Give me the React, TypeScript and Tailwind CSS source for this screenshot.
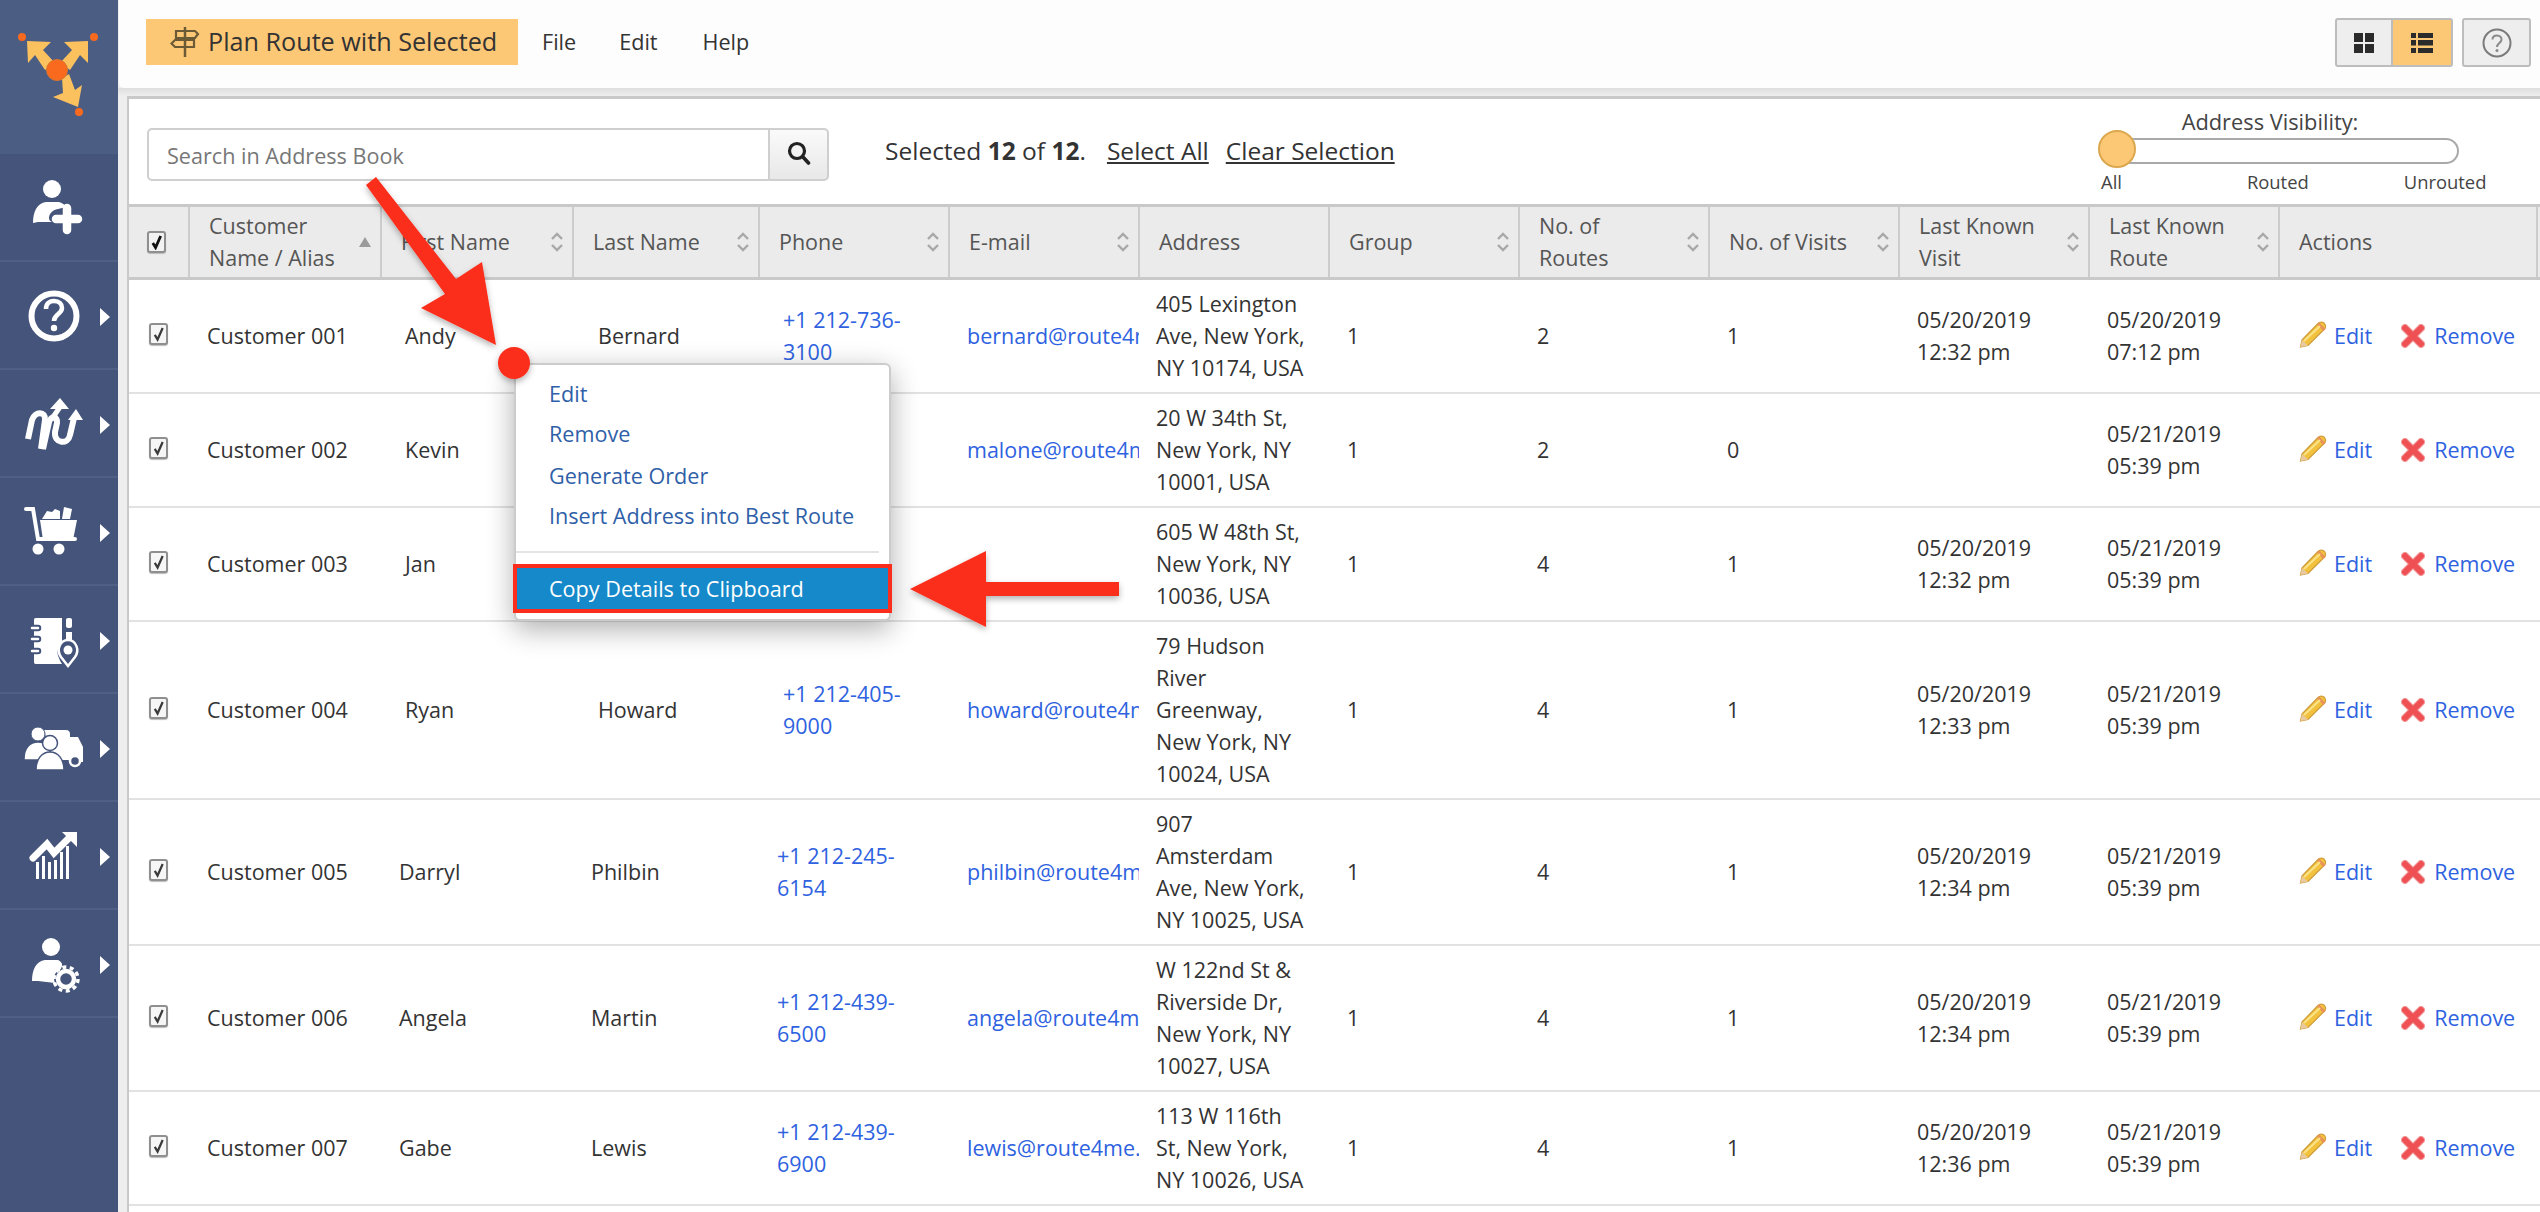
import React from "react";

const W = "#ffffff";

function Tri() {
  return <polygon points="100,46 110,55 100,64" fill={W} />;
}

function Cell({ children, light, tri = true }: { children: React.ReactNode; light?: boolean; tri?: boolean }) {
  return (
    <div className={light ? "h-[154px] bg-[#4c5d83]" : "h-[108px] border-b-2 border-[#4f5f85] bg-[#44547a]"}>
      <svg viewBox={light ? "0 0 118 154" : "0 0 118 106"} className={light ? "block w-[118px] h-[154px]" : "block w-[118px] h-[106px]"}>
        {children}
        {tri && !light ? <Tri /> : null}
      </svg>
    </div>
  );
}

function Sidebar() {
  return (
    <div className="w-[118px] shrink-0 bg-[#44547a] flex flex-col">
      <Cell light>
        <circle cx="22" cy="37" r="4" fill="#f96a1e" />
        <circle cx="94" cy="37" r="4" fill="#f96a1e" />
        <circle cx="79" cy="112" r="4" fill="#f96a1e" />
        <polygon points="27,41 51,42 43,50 55,63 45,70 35,55 28,63" fill="#fbc15e" />
        <polygon points="88,41 64,42 72,50 60,63 70,70 80,55 88,63" fill="#fbc15e" />
        <polygon points="62,78 69,74 75,90 82,85 78,107 53,97 63,93" fill="#fbc15e" />
        <circle cx="57" cy="70" r="10.5" fill="#f96a1e" stroke="#d8762e" strokeWidth="1" />
      </Cell>
      <Cell tri={false}>
        <circle cx="52" cy="35" r="9" fill={W} />
        <path d="M33 69 C33 58 37 49 46 48 L59 48 C63 49 65 51 66 53 L58 55 C52 56 49 60 49 64 C49 66 50 67 52 68 L38 68 Z" fill={W} />
        <path d="M56 65 H78 M67 54 V76" stroke={W} strokeWidth="8.5" strokeLinecap="round" />
      </Cell>
      <Cell>
        <circle cx="54" cy="54" r="22.5" fill="none" stroke={W} strokeWidth="6" />
        <path d="M46 47 C46 41 50 39 54 39 C59 39 62 42 62 46 C62 52 54 52 54 59" fill="none" stroke={W} strokeWidth="4.5" />
        <circle cx="54" cy="66" r="3.2" fill={W} />
      </Cell>
      <Cell>
        <path d="M28 69 L32 50 C35 41 46 41 45 50 L41 79" fill="none" stroke={W} strokeWidth="6" />
        <path d="M43 79 L49 52 C51 45 58 46 57 53 L55 62 C54 74 68 75 70 65 L74 48" fill="none" stroke={W} strokeWidth="6" />
        <path d="M51 50 L60 37" fill="none" stroke={W} strokeWidth="5" />
        <polygon points="50,39 60,28 69,39" fill={W} />
        <polygon points="68,50 76,39 83,50" fill={W} />
      </Cell>
      <Cell>
        <path d="M26 31 H33 L38 61 H75" fill="none" stroke={W} strokeWidth="4" strokeLinecap="round" />
        <path d="M40 42 H77 L73 62 H43 Z" fill={W} />
        <path d="M42 41 L47 33 L52 34 L55 31 L60 33 V41 Z" fill={W} />
        <path d="M62 41 L64 29 L72 31 L70 41 Z" fill={W} />
        <circle cx="38" cy="71" r="5.5" fill={W} />
        <circle cx="59" cy="71" r="5.5" fill={W} />
      </Cell>
      <Cell>
        <path d="M36 32 H62 V57 C58 61 56 66 59 72 C60 75 61 76 62 78 H36 C34 78 34 77 34 75 V35 C34 33 34 32 36 32 Z" fill={W} />
        <rect x="66" y="32" width="6" height="10" rx="2" fill={W} />
        <rect x="66" y="46" width="6" height="9" fill={W} />
        <path d="M32 42 H38 M32 53 H38 M32 65 H38" stroke="#44547a" strokeWidth="6.5" strokeLinecap="round" />
        <path d="M32 42 H38 M32 53 H38 M32 65 H38" stroke={W} strokeWidth="2.5" strokeLinecap="round" />
        <path d="M68 80 L61 71 C56 64 60 54 68 54 C76 54 80 64 75 71 Z" fill="#44547a" stroke={W} strokeWidth="2.5" />
        <circle cx="68" cy="64" r="4.5" fill={W} />
      </Cell>
      <Cell>
        <path d="M44 36 H66 C69 36 70 38 70 40 V66 H52 Z" fill={W} />
        <path d="M70 43 H78 L83 53 V68 H70 Z" fill={W} />
        <circle cx="75" cy="67" r="5" fill="#44547a" stroke={W} strokeWidth="2.5" />
        <circle cx="38" cy="40" r="7" fill={W} stroke="#44547a" strokeWidth="1" />
        <path d="M24 65 C24 54 30 48 38 48 C44 48 50 50 50 56 V66 H24 Z" fill={W} stroke="#44547a" strokeWidth="1.5" />
        <circle cx="50" cy="49" r="7.5" fill={W} stroke="#44547a" strokeWidth="1.5" />
        <path d="M36 76 C36 65 42 58 50 58 C58 58 64 65 64 76 Z" fill={W} stroke="#44547a" strokeWidth="1.5" />
      </Cell>
      <Cell>
        <path d="M33 56 L47 42 L54 51 L71 34" fill="none" stroke={W} strokeWidth="7" strokeLinecap="round" />
        <polygon points="62,30 77,30 77,45" fill={W} />
        <rect x="36" y="60" width="3" height="17" fill={W} />
        <rect x="42" y="54" width="3" height="23" fill={W} />
        <rect x="48" y="60" width="3" height="17" fill={W} />
        <rect x="54" y="58" width="3" height="19" fill={W} />
        <rect x="60" y="50" width="3" height="27" fill={W} />
        <rect x="66" y="44" width="3" height="33" fill={W} />
      </Cell>
      <Cell>
        <circle cx="51" cy="37" r="9" fill={W} />
        <path d="M32 71 C32 60 36 51 45 50 L58 50 C62 52 64 55 60 60 C54 62 53 68 55 73 L38 71 Z" fill={W} />
        <circle cx="66" cy="69" r="8" fill="none" stroke={W} strokeWidth="4.5" />
        <circle cx="66" cy="69" r="12" fill="none" stroke={W} strokeWidth="3.5" strokeDasharray="4 3.5" />
      </Cell>
    </div>
  );
}

function SignIcon() {
  return (
    <svg viewBox="0 0 30 32" className="w-[30px] h-[32px] shrink-0">
      <path d="M15 1 V31" stroke="#6b5a36" strokeWidth="2.5" />
      <path d="M6 5 H25 L28 8 L25 12 H6 Z" fill="none" stroke="#6b5a36" strokeWidth="2.2" />
      <path d="M24 14 H5 L1.5 17.5 L5 21 H24 Z" fill="none" stroke="#6b5a36" strokeWidth="2.2" />
    </svg>
  );
}

function Header() {
  return (
    <div className="h-[88px] shrink-0 ml-[1px] bg-[#fdfdfd] rounded-bl-[5px] flex items-center text-[21.6px] text-[#333] pr-[9px]">
      <button className="h-[46px] w-[372px] ml-[27px] mb-[5px] bg-[#fdc875] flex items-center pl-[24px] gap-[8px] text-[25.2px] text-[#333] whitespace-nowrap">
        <SignIcon />
        <span>Plan Route with Selected</span>
      </button>
      <span className="ml-[24px] mb-[3px]">File</span>
      <span className="ml-[43px] mb-[3px]">Edit</span>
      <span className="ml-[45px] mb-[3px]">Help</span>
      <div className="ml-auto flex items-center mb-[3px]">
        <div className="w-[58px] h-[49px] bg-[#eeeeee] border-2 border-[#bdbdbd] rounded-l-[3px] flex items-center justify-center">
          <svg viewBox="0 0 20 20" className="w-[20px] h-[20px]">
            <rect x="0" y="0" width="9" height="9" fill="#2b2b2b" />
            <rect x="11" y="0" width="9" height="9" fill="#2b2b2b" />
            <rect x="0" y="11" width="9" height="9" fill="#2b2b2b" />
            <rect x="11" y="11" width="9" height="9" fill="#2b2b2b" />
          </svg>
        </div>
        <div className="w-[60px] h-[49px] bg-[#fdc875] border-y-2 border-r-2 border-[#bdbdbd] rounded-r-[3px] flex items-center justify-center">
          <svg viewBox="0 0 22 20" className="w-[22px] h-[20px]">
            <rect x="0" y="0" width="5" height="5" fill="#2b2b2b" />
            <rect x="7" y="0" width="15" height="5" fill="#2b2b2b" />
            <rect x="0" y="7" width="5" height="5.5" fill="#2b2b2b" />
            <rect x="7" y="7" width="15" height="5.5" fill="#2b2b2b" />
            <rect x="0" y="15" width="5" height="5" fill="#2b2b2b" />
            <rect x="7" y="15" width="15" height="5" fill="#2b2b2b" />
          </svg>
        </div>
        <div className="ml-[9px] w-[69px] h-[49px] bg-[#eeeeee] border-2 border-[#bdbdbd] rounded-[3px] flex items-center justify-center">
          <svg viewBox="0 0 30 30" className="w-[30px] h-[30px]">
            <circle cx="15" cy="15" r="13.5" fill="none" stroke="#7a7a7a" strokeWidth="2" />
            <path d="M10.5 11.5 C10.5 8.5 13 7.5 15 7.5 C18 7.5 19.5 9.5 19.5 11.5 C19.5 15 15 15 15 19" fill="none" stroke="#8a8a8a" strokeWidth="2" />
            <circle cx="15" cy="22.5" r="1.5" fill="#8a8a8a" />
          </svg>
        </div>
      </div>
    </div>
  );
}

function Toolbar() {
  return (
    <div className="h-[105px] flex items-start pl-[18px] text-[#333]">
      <div className="mt-[29px] w-[682px] h-[53px] flex">
        <div className="w-[624px] h-full border-2 border-[#cfcfcf] rounded-l-[5px] flex items-center pl-[18px] text-[21.6px] text-[#777] pt-[3px] bg-white">
          Search in Address Book
        </div>
        <div className="w-[59px] h-full border-y-2 border-r-2 border-[#cfcfcf] rounded-r-[5px] bg-gradient-to-b from-[#fafafa] to-[#e8e8e8] flex items-center justify-center pb-[4px]">
          <svg viewBox="0 0 24 24" className="w-[24px] h-[24px]">
            <circle cx="10" cy="10" r="7.5" fill="none" stroke="#222" strokeWidth="3.2" />
            <path d="M15.5 15.5 L21.5 22" stroke="#222" strokeWidth="3.6" strokeLinecap="round" />
          </svg>
        </div>
      </div>
      <div className="ml-[56px] mt-[34px] text-[24.5px] whitespace-nowrap leading-[36px]">
        Selected <b className="font-bold">12</b> of <b className="font-bold">12</b>.
        <span className="underline ml-[21px]">Select All</span>
        <span className="underline ml-[17px]">Clear Selection</span>
      </div>
      <div className="ml-auto w-[442px] mt-[8px] relative">
        <div className="text-[21.8px] leading-[30px] text-center text-[#444] pr-[98px] h-[31px]">Address Visibility:</div>
        <div className="ml-[17px] w-[344px] h-[26px] border-2 border-[#a9a9a9] rounded-full bg-white" />
        <div className="absolute left-[0px] top-[23px] w-[38px] h-[38px] rounded-full bg-[#fdc875] border-2 border-[#dba850]" />
        <div className="flex text-[18.4px] text-[#444] mt-[5px] leading-[26px]">
          <span className="ml-[3px]">All</span>
          <span className="ml-[125px]">Routed</span>
          <span className="ml-[95px]">Unrouted</span>
        </div>
      </div>
    </div>
  );
}

function Sort() {
  return (
    <svg viewBox="0 0 14 20" className="w-[14px] h-[20px] shrink-0">
      <path d="M2 7 L7 2 L12 7" fill="none" stroke="#a8a8a8" strokeWidth="2.4" />
      <path d="M2 13 L7 18 L12 13" fill="none" stroke="#a8a8a8" strokeWidth="2.4" />
    </svg>
  );
}

function SortAsc() {
  return (
    <svg viewBox="0 0 14 12" className="w-[14px] h-[12px] shrink-0">
      <polygon points="7,1 13,11 1,11" fill="#9b9b9b" />
    </svg>
  );
}

function Check({ dark }: { dark?: boolean }) {
  return (
    <div className={"w-[19px] h-[22px] border-2 border-[#8f8f8f] rounded-[3px] flex items-center justify-center shadow-[0_1px_1px_#bbb] " + (dark ? "bg-[#f2f2f2]" : "bg-[#f6f6f6]")}>
      <svg viewBox="0 0 14 16" className="w-[13px] h-[16px]">
        <path d="M3 9 L6 14 L11.5 1.5" fill="none" stroke={dark ? "#111" : "#3a3a3a"} strokeWidth={dark ? 3 : 2.4} />
      </svg>
    </div>
  );
}

function Pencil() {
  return (
    <svg viewBox="0 0 28 28" className="w-[28px] h-[28px] shrink-0">
      <path d="M3 20 L19 3.5 C21 1.5 24 2 25.5 3.5 C27 5.5 27 8 25 9.5 L9 25.5 L1.5 27 Z" fill="#f2c23e" stroke="#cf9c3a" strokeWidth="1.2" />
      <path d="M19 3.5 L25.5 10" stroke="#e8915a" strokeWidth="3" />
      <path d="M5 21 L21 6" stroke="#fbe38a" strokeWidth="2" />
      <path d="M3 20 L9 25.5 L1.5 27 Z" fill="#e9c9a0" />
    </svg>
  );
}

function Cross() {
  return (
    <svg viewBox="0 0 24 24" className="w-[24px] h-[24px] shrink-0">
      <path d="M4 4 L20 20 M20 4 L4 20" stroke="#f3a0a0" strokeWidth="8" strokeLinecap="round" />
      <path d="M4 4 L20 20 M20 4 L4 20" stroke="#ee5054" strokeWidth="6" strokeLinecap="round" />
    </svg>
  );
}

type Row = {
  name: string;
  first: string;
  last: string;
  phone: string[];
  email: string;
  addr: string[];
  routes: string;
  visits: string;
  visit: string[];
  route: string[];
  shift: boolean;
};

const r2 = ["05/21/2019", "05:39 pm"];
const rows: Row[] = [
  { name: "Customer 001", first: "Andy", last: "Bernard", phone: ["+1 212-736-", "3100"], email: "bernard@route4me.com", addr: ["405 Lexington", "Ave, New York,", "NY 10174, USA"], routes: "2", visits: "1", visit: ["05/20/2019", "12:32 pm"], route: ["05/20/2019", "07:12 pm"], shift: true },
  { name: "Customer 002", first: "Kevin", last: "", phone: [], email: "malone@route4me.com", addr: ["20 W 34th St,", "New York, NY", "10001, USA"], routes: "2", visits: "0", visit: [], route: r2, shift: true },
  { name: "Customer 003", first: "Jan", last: "", phone: [], email: "", addr: ["605 W 48th St,", "New York, NY", "10036, USA"], routes: "4", visits: "1", visit: ["05/20/2019", "12:32 pm"], route: r2, shift: true },
  { name: "Customer 004", first: "Ryan", last: "Howard", phone: ["+1 212-405-", "9000"], email: "howard@route4me.com", addr: ["79 Hudson", "River", "Greenway,", "New York, NY", "10024, USA"], routes: "4", visits: "1", visit: ["05/20/2019", "12:33 pm"], route: r2, shift: true },
  { name: "Customer 005", first: "Darryl", last: "Philbin", phone: ["+1 212-245-", "6154"], email: "philbin@route4me.com", addr: ["907", "Amsterdam", "Ave, New York,", "NY 10025, USA"], routes: "4", visits: "1", visit: ["05/20/2019", "12:34 pm"], route: r2, shift: false },
  { name: "Customer 006", first: "Angela", last: "Martin", phone: ["+1 212-439-", "6500"], email: "angela@route4me.com", addr: ["W 122nd St &", "Riverside Dr,", "New York, NY", "10027, USA"], routes: "4", visits: "1", visit: ["05/20/2019", "12:34 pm"], route: r2, shift: false },
  { name: "Customer 007", first: "Gabe", last: "Lewis", phone: ["+1 212-439-", "6900"], email: "lewis@route4me.com", addr: ["113 W 116th", "St, New York,", "NY 10026, USA"], routes: "4", visits: "1", visit: ["05/20/2019", "12:36 pm"], route: r2, shift: false },
];

const LINK = "text-[#2e62e0]";

function Lines({ items }: { items: string[] }) {
  return (
    <>
      {items.map((t) => (
        <div key={t}>{t}</div>
      ))}
    </>
  );
}

function Th({ lines, sort = "both" }: { lines: string[]; sort?: "both" | "asc" | "none" }) {
  return (
    <th className="border-r-2 border-[#cccccc] p-0 font-normal text-left">
      <div className="flex items-center justify-between pl-[19px] pr-[8px] leading-[32px] text-[#555]">
        <div>
          <Lines items={lines} />
        </div>
        {sort === "both" ? <Sort /> : sort === "asc" ? <SortAsc /> : null}
      </div>
    </th>
  );
}

function Table() {
  const widths = [60, 192, 192, 186, 190, 190, 190, 190, 190, 190, 190, 190, 258, 3];
  return (
    <table className="table-fixed w-[2411px] text-[21.5px] leading-[32px] text-[#333]">
      <colgroup>
        {widths.map((w, i) => (
          <col key={i} style={{ width: w }} />
        ))}
      </colgroup>
      <thead>
        <tr className="h-[73px] bg-[#ebebeb] border-y-[3px] border-[#c9c9c9]">
          <th className="border-r-2 border-[#cccccc] p-0 pl-[18px] font-normal">
            <Check dark />
          </th>
          <Th lines={["Customer", "Name / Alias"]} sort="asc" />
          <Th lines={["First Name"]} />
          <Th lines={["Last Name"]} />
          <Th lines={["Phone"]} />
          <Th lines={["E-mail"]} />
          <Th lines={["Address"]} sort="none" />
          <Th lines={["Group"]} />
          <Th lines={["No. of", "Routes"]} />
          <Th lines={["No. of Visits"]} />
          <Th lines={["Last Known", "Visit"]} />
          <Th lines={["Last Known", "Route"]} />
          <Th lines={["Actions"]} sort="none" />
          <th className="p-0" />
        </tr>
      </thead>
      <tbody>
        {rows.map((r) => (
          <tr key={r.name} className="border-b-2 border-[#e2e2e2]">
            <td className="py-[8px] pl-[20px]">
              <div className="mb-[5px]">
                <Check />
              </div>
            </td>
            <td className="pl-[18px] whitespace-nowrap">{r.name}</td>
            <td className={r.shift ? "pl-[24px]" : "pl-[18px]"}>{r.first}</td>
            <td className={r.shift ? "pl-[25px]" : "pl-[18px]"}>{r.last}</td>
            <td className={(r.shift ? "pl-[24px] " : "pl-[18px] ") + LINK}>
              <Lines items={r.phone} />
            </td>
            <td className={"pl-[18px] whitespace-nowrap overflow-hidden " + LINK}>{r.email}</td>
            <td className="pl-[17px] py-[8px] whitespace-nowrap">
              <Lines items={r.addr} />
            </td>
            <td className="pl-[18px]">1</td>
            <td className="pl-[18px]">{r.routes}</td>
            <td className="pl-[18px]">{r.visits}</td>
            <td className="pl-[18px]">
              <Lines items={r.visit} />
            </td>
            <td className="pl-[18px]">
              <Lines items={r.route} />
            </td>
            <td className="pl-[20px]">
              <div className={"flex items-center whitespace-nowrap " + LINK}>
                <div className="mb-[5px]">
                  <Pencil />
                </div>
                <span className="ml-[7px]">Edit</span>
                <div className="ml-[29px] mb-[1px]">
                  <Cross />
                </div>
                <span className="ml-[9px]">Remove</span>
              </div>
            </td>
            <td />
          </tr>
        ))}
      </tbody>
    </table>
  );
}

function ContextMenu() {
  return (
    <div className="absolute left-[514px] top-[363px] w-[377px] h-[258px] bg-white border-2 border-[#cccccc] rounded-[6px] shadow-[0_8px_28px_rgba(0,0,0,0.32)] text-[21.6px] text-[#2f5fa8]">
      <div className="absolute left-[33px] top-[13px] leading-[32px]">Edit</div>
      <div className="absolute left-[33px] top-[53px] leading-[32px]">Remove</div>
      <div className="absolute left-[33px] top-[95px] leading-[32px]">Generate Order</div>
      <div className="absolute left-[33px] top-[135px] leading-[32px] whitespace-nowrap">Insert Address into Best Route</div>
      <div className="absolute left-0 right-[10px] top-[186px] h-[2px] bg-[#e4e4e4]" />
      <div className="absolute left-[-3px] right-[-3px] top-[199px] h-[49px] bg-[#1589c9] border-[4px] border-[#fb2d1c] text-white pl-[32px] leading-[42px] whitespace-nowrap">
        Copy Details to Clipboard
      </div>
    </div>
  );
}

function Annotations() {
  return (
    <svg viewBox="0 0 2540 1212" className="absolute inset-0 w-[2540px] h-[1212px] pointer-events-none">
      <defs>
        <filter id="sh" x="-20%" y="-20%" width="140%" height="140%">
          <feDropShadow dx="0" dy="3" stdDeviation="3" floodColor="#000" floodOpacity="0.3" />
        </filter>
      </defs>
      <g fill="#fb2d1c" filter="url(#sh)">
        <polygon points="366,185 376,177 456,279 482,262 496,345 421,308 445,294" />
        <circle cx="514" cy="363" r="16" />
        <polygon points="910,589 986,551 986,582 1119,582 1119,596 986,596 986,627" />
      </g>
    </svg>
  );
}

export default function App() {
  return (
    <div className="relative flex w-[2540px] h-[1212px] overflow-hidden bg-[#eeeeee] font-['Open_Sans',sans-serif]">
      <Sidebar />
      <div className="flex-1 min-w-0 flex flex-col">
        <Header />
        <div className="h-[8px] shrink-0 bg-gradient-to-b from-[#dedede] to-[#eeeeee]" />
        <div className="flex-1 ml-[9px] bg-white border-l-2 border-t-[3px] border-[#c9c9c9] min-h-0">
          <Toolbar />
          <Table />
        </div>
      </div>
      <ContextMenu />
      <Annotations />
    </div>
  );
}
